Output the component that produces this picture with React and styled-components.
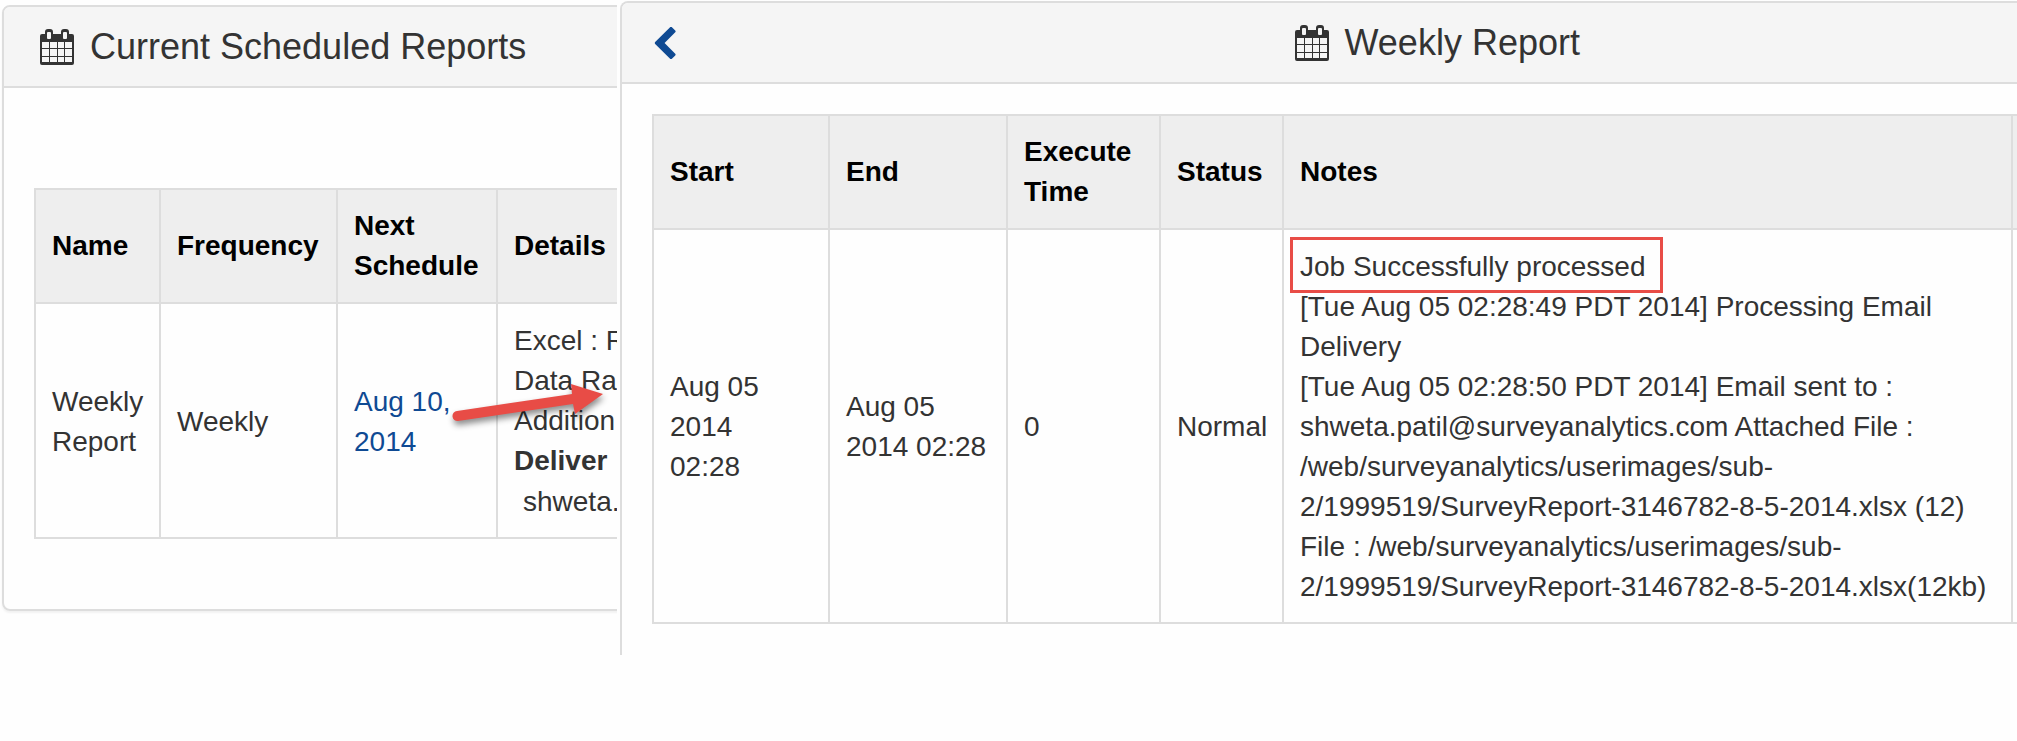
import React from 'react';
import styled, { createGlobalStyle } from 'styled-components';

const GlobalStyle = createGlobalStyle`
  * {
    box-sizing: border-box;
  }

  body {
    margin: 0;
    background: #fefefe;
    color: #333333;
    font-family: 'Liberation Sans', Arial, sans-serif;
    font-size: 28px;
    line-height: 40px;
  }
`;

// Layout
const Page = styled.main`
  display: grid;
  grid-template-columns: 617fr 1397fr;
  gap: 3px;
  align-items: start;
  overflow: hidden;
`;

const Pane = styled.div`
  position: relative;
  min-width: 0;
  overflow: hidden;
  padding: ${({ $inset }) => $inset};
`;

const Panel = styled.section`
  width: ${({ $width }) => $width};
  border: 2px solid #dddddd;
  border-bottom-width: ${({ $open }) => ($open ? 0 : '2px')};
  border-radius: ${({ $open }) => ($open ? '8px 8px 0 0' : '8px')};
  box-shadow: 0 2px 2px rgba(0, 0, 0, 0.05);
`;

const PanelHeader = styled.header`
  display: grid;
  grid-template-columns: ${({ $centered }) => ($centered ? '1fr auto 1fr' : 'auto')};
  align-items: center;
  padding: ${({ $centered }) => ($centered ? '18px 32px' : '18px 36px')};
  background: #f5f5f5;
  border-bottom: 2px solid #dddddd;
  border-radius: 6px 6px 0 0;
`;

const PanelBody = styled.div`
  padding: ${({ $padding }) => $padding};
`;

const Title = styled.h2`
  display: flex;
  align-items: center;
  gap: 16px;
  margin: 0;
  font-size: 36px;
  font-weight: 400;
  line-height: 43px;
  white-space: nowrap;
`;

const BackButton = styled.button`
  display: flex;
  justify-self: start;
  padding: 0;
  border: 0;
  background: none;
  color: #0f4a93;
  cursor: pointer;
`;

// Tables
const Table = styled.table`
  width: 100%;
  table-layout: fixed;
  border-collapse: collapse;
`;

const Col = styled.col`
  width: ${({ $width }) => $width};
`;

const Th = styled.th`
  padding: 16px;
  border: 2px solid #dddddd;
  background: #eeeeee;
  color: #000000;
  font-weight: 700;
  text-align: left;
`;

const Td = styled.td`
  padding: 17px 16px 15px;
  border: 2px solid #dddddd;
`;

const ScheduleLink = styled.a`
  color: #0f4a93;
  text-decoration: none;
`;

const Recipient = styled.div`
  padding: 1px 0 0 9px;
`;

const Highlight = styled.span`
  position: relative;

  &::after {
    content: '';
    position: absolute;
    inset: -14px -17px -11px -10px;
    border: 3px solid #e84c46;
  }
`;

const ArrowSvg = styled.svg`
  position: absolute;
  top: 376px;
  left: 446px;
  pointer-events: none;
  filter: drop-shadow(1px 4px 3px rgba(0, 0, 0, 0.45));
`;

// Icons
const CalendarIcon = () => (
  <svg width="34" height="36" viewBox="0 0 34 36" fill="none" stroke="currentColor" aria-hidden="true">
    <path
      fill="currentColor"
      fillRule="evenodd"
      stroke="none"
      d="M2 5H5V3Q5 0 8 0H10Q13 0 13 3V5H21V3Q21 0 24 0H26Q29 0 29 3V5H32Q34 5 34 7V34Q34 36 32 36H2Q0 36 0 34V7Q0 5 2 5ZM8 3Q7 3 7 4V9Q7 10 8 10H10Q11 10 11 9V4Q11 3 10 3ZM24 3Q23 3 23 4V9Q23 10 24 10H26Q27 10 27 9V4Q27 3 26 3ZM2 13V33H32V13Z"
    />
    <path d="M9.5 13V33M17.5 13V33M24.5 13V33M2 19.5H32M2 27.5H32" />
  </svg>
);

const ChevronLeftIcon = () => (
  <svg width="22" height="32" viewBox="378 38 1080 1590" fill="currentColor" aria-hidden="true">
    <path d="M1427 301l-531 531 531 531q19 19 19 45t-19 45l-166 166q-19 19-45 19t-45-19l-742-742q-19-19-19-45t19-45l742-742q19-19 45-19t45 19l166 166q19 19 19 45t-19 45z" />
  </svg>
);

const Arrow = () => (
  <ArrowSvg width="166" height="60" viewBox="446 376 166 60" aria-hidden="true">
    <path
      d="M457 411L572 394L571 384L603 394L575 414L573 404L458 421A5 5 0 0 1 457 411Z"
      fill="#e84c46"
    />
  </ArrowSvg>
);

const ScheduledReports = () => (
  <Pane $inset="5px 0 8px 2px">
    <Panel $width="140%">
      <PanelHeader>
        <Title>
          <CalendarIcon />
          Current Scheduled Reports
        </Title>
      </PanelHeader>
      <PanelBody $padding="100px 30px 70px">
        <Table>
          <colgroup>
            <Col $width="125px" />
            <Col $width="177px" />
            <Col $width="160px" />
            <Col />
          </colgroup>
          <thead>
            <tr>
              <Th scope="col">Name</Th>
              <Th scope="col">Frequency</Th>
              <Th scope="col">Next Schedule</Th>
              <Th scope="col">Details</Th>
            </tr>
          </thead>
          <tbody>
            <tr>
              <Td>Weekly Report</Td>
              <Td>Weekly</Td>
              <Td>
                <ScheduleLink href="#weekly-report">Aug 10, 2014</ScheduleLink>
              </Td>
              <Td>
                Excel : R<br />
                Data Ra<br />
                Addition<br />
                <strong>Deliver</strong>
                <Recipient>shweta.</Recipient>
              </Td>
            </tr>
          </tbody>
        </Table>
      </PanelBody>
    </Panel>
    <Arrow />
  </Pane>
);

const WeeklyReport = () => (
  <Pane $inset="1px 0 0">
    <Panel id="weekly-report" $width="117%" $open>
      <PanelHeader $centered>
        <BackButton type="button" aria-label="Back to scheduled reports">
          <ChevronLeftIcon />
        </BackButton>
        <Title>
          <CalendarIcon />
          Weekly Report
        </Title>
      </PanelHeader>
      <PanelBody $padding="30px 30px 31px">
        <Table>
          <colgroup>
            <Col $width="176px" />
            <Col $width="178px" />
            <Col $width="153px" />
            <Col $width="123px" />
            <Col />
            <Col $width="209px" />
          </colgroup>
          <thead>
            <tr>
              <Th scope="col">Start</Th>
              <Th scope="col">End</Th>
              <Th scope="col">Execute Time</Th>
              <Th scope="col">Status</Th>
              <Th scope="col">Notes</Th>
              <Th scope="col" />
            </tr>
          </thead>
          <tbody>
            <tr>
              <Td>Aug 05 2014<br />02:28</Td>
              <Td>Aug 05<br />2014 02:28</Td>
              <Td>0</Td>
              <Td>Normal</Td>
              <Td>
                <Highlight>Job Successfully processed</Highlight><br />
                [Tue Aug 05 02:28:49 PDT 2014] Processing Email Delivery<br />
                [Tue Aug 05 02:28:50 PDT 2014] Email sent to :<br />
                shweta.patil@surveyanalytics.com Attached File :<br />
                /web/surveyanalytics/userimages/sub-<br />
                2/1999519/SurveyReport-3146782-8-5-2014.xlsx (12)<br />
                File : /web/surveyanalytics/userimages/sub-<br />
                2/1999519/SurveyReport-3146782-8-5-2014.xlsx(12kb)
              </Td>
              <Td />
            </tr>
          </tbody>
        </Table>
      </PanelBody>
    </Panel>
  </Pane>
);

const App = () => (
  <>
    <GlobalStyle />
    <Page>
      <ScheduledReports />
      <WeeklyReport />
    </Page>
  </>
);

export default App;
